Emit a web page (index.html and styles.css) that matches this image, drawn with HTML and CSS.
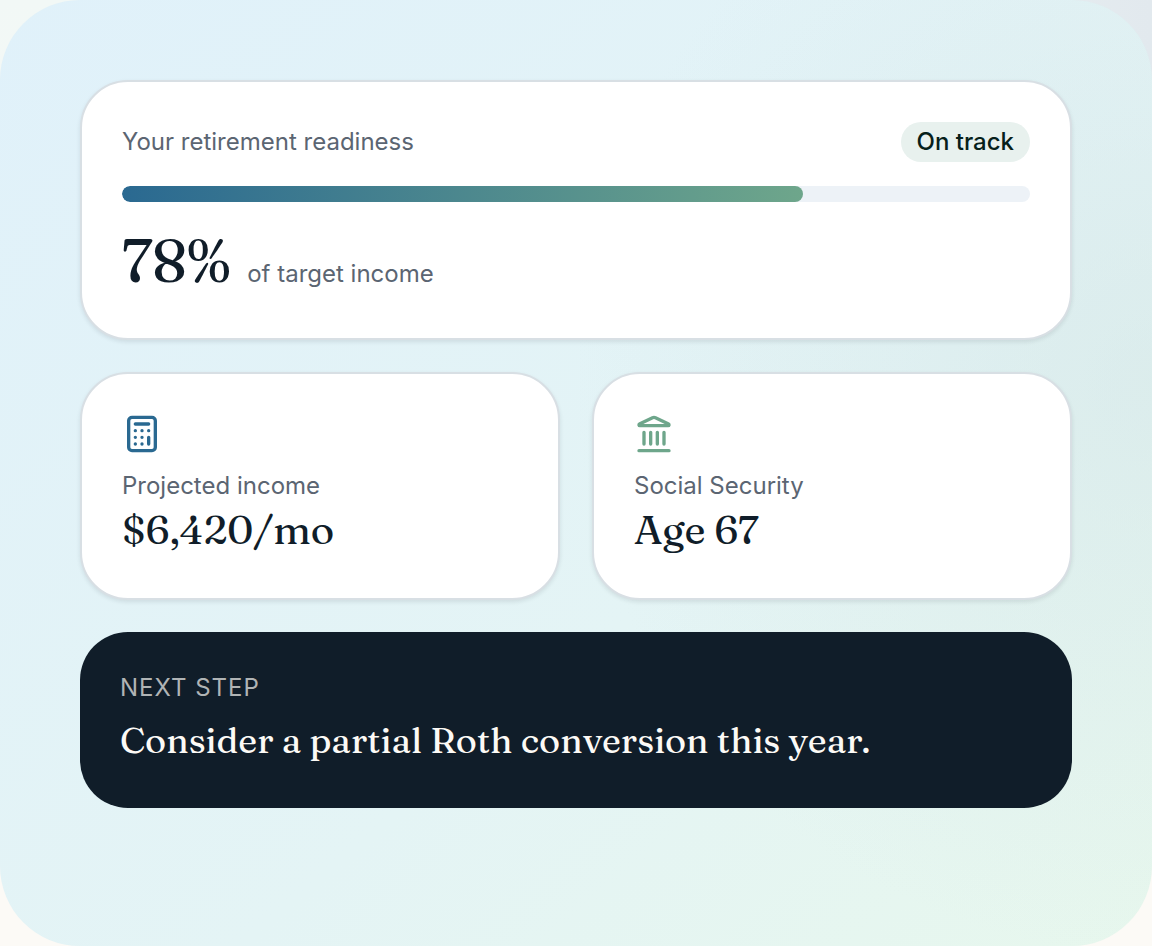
FILE: index.html
```html
<!DOCTYPE html>
<html lang="en">
    <head>
        <meta charset="utf-8">
        <meta name="viewport" content="width=device-width, initial-scale=1">
        <title>Retirement readiness</title>
        <link rel="stylesheet" href="styles.css">
    </head>
    <body>
        <main class="panel">
            <section class="card">
                <div class="card-head">
                    <span class="label" id="readiness">Your retirement readiness</span>
                    <span class="badge">On track</span>
                </div>
                <div class="bar" role="progressbar" aria-labelledby="readiness" aria-valuenow="78" aria-valuemin="0" aria-valuemax="100">
                    <div class="bar-fill" style="width: 75%"></div>
                </div>
                <div class="score">
                    <span class="score-value">78%</span>
                    <span class="label">of target income</span>
                </div>
            </section>

            <div class="stats">
                <section class="card">
                    <svg class="icon icon-blue" viewBox="0 0 24 24" aria-hidden="true">
                        <rect width="16" height="20" x="4" y="2" rx="2"/>
                        <path d="M8 6h8M16 14v4M16 10h.01M12 10h.01M8 10h.01M12 14h.01M8 14h.01M12 18h.01M8 18h.01"/>
                    </svg>
                    <div class="label">Projected income</div>
                    <div class="stat-value">$6,420/mo</div>
                </section>
                <section class="card">
                    <svg class="icon icon-green" viewBox="0 0 24 24" aria-hidden="true">
                        <path d="M10 18v-7M14 18v-7M18 18v-7M6 18v-7M3 22h18"/>
                        <path d="M11.12 2.198a2 2 0 0 1 1.76.006l7.866 3.847c.476.233.31.949-.22.949H3.474c-.53 0-.695-.716-.22-.949z"/>
                    </svg>
                    <div class="label">Social Security</div>
                    <div class="stat-value">Age 67</div>
                </section>
            </div>

            <section class="next">
                <div class="next-label">Next step</div>
                <div class="next-text">Consider a partial Roth conversion this year.</div>
            </section>
        </main>
    </body>
</html>
```

FILE: styles.css
```css
*{
    box-sizing: border-box;
}
body{
    margin: 0;
    font-family: Inter, "Liberation Sans", sans-serif;
    font-size: 24px;
    line-height: 32px;
    color: #101d29;
    background: linear-gradient(90deg, rgba(226,233,238,0) 50%, #e2e9ee) top / 100% 200px no-repeat,
        linear-gradient(#f2f8f6, #fcfaf6 70%);
}
.panel{
    display: flex;
    flex-direction: column;
    gap: 32px;
    min-height: 100vh;
    padding: 80px;
    border-radius: 80px;
    background: radial-gradient(circle at 100% 40%, rgba(205,224,226,0.4), rgba(205,224,226,0) 45%),
        linear-gradient(140deg, #e0f1fa, #e4f4f5 60%, #e7f7ed);
}
.card{
    padding: 40px;
    background: #fff;
    border: 2px solid #d8dfe4;
    border-radius: 48px;
    box-shadow: 0 2px 4px rgba(16,29,41,0.1);
}
.card-head{
    display: flex;
    justify-content: space-between;
    align-items: center;
}
.label{
    color: #5b6572;
}
.badge{
    padding: 4px 16px;
    border-radius: 20px;
    background: #e8f1ee;
    color: #06201a;
    font-weight: 500;
}
.bar{
    height: 16px;
    margin-top: 24px;
    border-radius: 8px;
    background: #edf2f7;
    overflow: hidden;
}
.bar-fill{
    height: 100%;
    border-radius: 8px;
    background: linear-gradient(90deg, #2a6991, #6ea68b);
}
.score{
    display: flex;
    align-items: baseline;
    gap: 16px;
    margin: 24px 0 4px;
}
.score-value,
.stat-value,
.next-text{
    font-family: Fraunces, "Liberation Serif", serif;
}
.score-value{
    font-size: 60px;
    line-height: 68px;
}
.stats{
    display: grid;
    grid-template-columns: 1fr 1fr;
    gap: 32px;
}
.icon{
    display: block;
    width: 40px;
    height: 40px;
    margin-bottom: 16px;
    fill: none;
    stroke: currentColor;
    stroke-width: 2;
    stroke-linecap: round;
    stroke-linejoin: round;
}
.icon-blue{
    color: #2a6991;
}
.icon-green{
    color: #6ea68b;
}
.stat-value{
    font-size: 40px;
    line-height: 56px;
}
.next{
    padding: 40px;
    border-radius: 48px;
    background: #101d29;
    color: #fcfaf6;
}
.next-label{
    color: #b0b4b5;
    text-transform: uppercase;
    letter-spacing: 1px;
}
.next-text{
    margin-top: 8px;
    font-size: 36px;
    line-height: 56px;
}
```
